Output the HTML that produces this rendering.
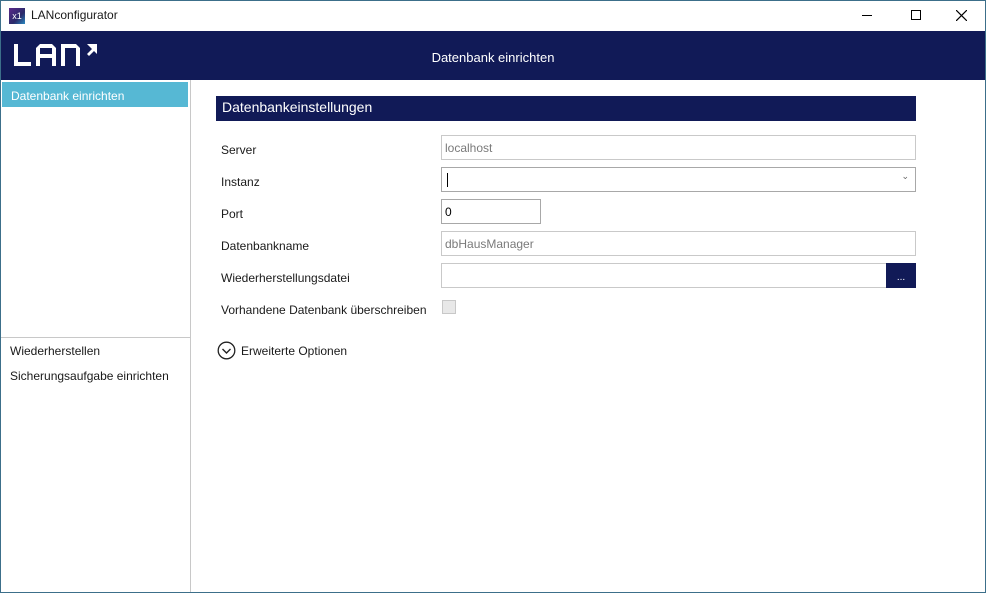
<!DOCTYPE html>
<html><head><meta charset="utf-8"><style>
*{margin:0;padding:0;box-sizing:border-box}
body{width:986px;height:593px;overflow:hidden;background:#fff;font-family:"Segoe UI","Liberation Sans",sans-serif;font-size:12px;color:#1a1a1a;position:relative}
.win{position:absolute;inset:0;border:1px solid #3c6f8a;}
.abs{position:absolute}
.lbl{position:absolute;left:221px;font-size:12px}
.inp{position:absolute;left:441px;height:25px;border:1px solid #c9c9c9;padding:5px 3px 0;color:#7a7a7a;font-size:12px}
</style></head><body>
<div class="win"></div>
<div class="abs" style="left:9px;top:8px;width:16px;height:16px;background:linear-gradient(135deg,#5a2a8a,#2a2a6a 60%,#2a8ac0);color:#fff;font-size:9px;line-height:16px;text-align:center">x1</div>
<div class="abs" style="left:31px;top:8px;font-size:12px">LANconfigurator</div>
<div class="abs" style="left:862px;top:15px;width:10px;height:1px;background:#000"></div>
<div class="abs" style="left:911px;top:10px;width:10px;height:10px;border:1px solid #000"></div>
<svg class="abs" style="left:956px;top:10px" width="11" height="11"><path d="M0 0L11 11M11 0L0 11" stroke="#000" stroke-width="1.2"/></svg>
<div class="abs" style="left:1px;top:31px;width:984px;height:49px;background:#111a57"></div>
<svg class="abs" style="left:14px;top:44px" width="86" height="24">
<g fill="#fff">
<rect x="0" y="0" width="4" height="22"/><rect x="0" y="18" width="17" height="4"/>
<path d="M22 22V4l4-4h12l4 4v18h-4v-8H26v8zM26 10h12V4H26z"/>
<path d="M47 22V0h15l4 4v18h-4V4H51v18z"/>
<path d="M73 0h10v10l-3-3-5 5-2-2 5-5z"/>
</g></svg>
<div class="abs" style="left:0;width:986px;top:50px;text-align:center;color:#fff;font-size:13px">Datenbank einrichten</div>
<div class="abs" style="left:190px;top:80px;width:1px;height:512px;background:#c8c8c8"></div>
<div class="abs" style="left:2px;top:82px;width:186px;height:25px;background:#56b8d4;color:#fff;padding:7px 0 0 9px;font-size:12px">Datenbank einrichten</div>
<div class="abs" style="left:1px;top:337px;width:189px;height:1px;background:#c8c8c8"></div>
<div class="abs" style="left:10px;top:344px">Wiederherstellen</div>
<div class="abs" style="left:10px;top:369px">Sicherungsaufgabe einrichten</div>
<div class="abs" style="left:216px;top:96px;width:700px;height:25px;background:#111a57;color:#fff;font-size:14px;padding:3px 0 0 6px">Datenbankeinstellungen</div>
<div class="lbl" style="top:143px">Server</div>
<div class="lbl" style="top:175px">Instanz</div>
<div class="lbl" style="top:207px">Port</div>
<div class="lbl" style="top:239px">Datenbankname</div>
<div class="lbl" style="top:271px">Wiederherstellungsdatei</div>
<div class="lbl" style="top:303px">Vorhandene Datenbank überschreiben</div>
<div class="inp" style="top:135px;width:475px">localhost</div>
<div class="inp" style="top:167px;width:475px;border-color:#a8a8a8"><div class="abs" style="left:5px;top:5px;width:1px;height:14px;background:#000"></div><span class="abs" style="right:6px;top:3px;font-size:9px;color:#666">⌄</span></div>
<div class="inp" style="top:199px;width:100px;border-color:#a8a8a8;color:#000">0</div>
<div class="inp" style="top:231px;width:475px">dbHausManager</div>
<div class="inp" style="top:263px;width:446px"></div>
<div class="abs" style="left:886px;top:263px;width:30px;height:25px;background:#111a57;color:#fff;text-align:center;font-size:10px;line-height:30px">...</div>
<div class="abs" style="left:442px;top:300px;width:14px;height:14px;border:1px solid #c8c8c8;background:#e8e8e8"></div>
<svg class="abs" style="left:217px;top:341px" width="19" height="19"><circle cx="9.5" cy="9.5" r="8.3" fill="none" stroke="#222" stroke-width="1.3"/><path d="M5.5 8l4 4 4-4" fill="none" stroke="#222" stroke-width="1.4"/></svg>
<div class="abs" style="left:241px;top:344px">Erweiterte Optionen</div>
</body></html>
